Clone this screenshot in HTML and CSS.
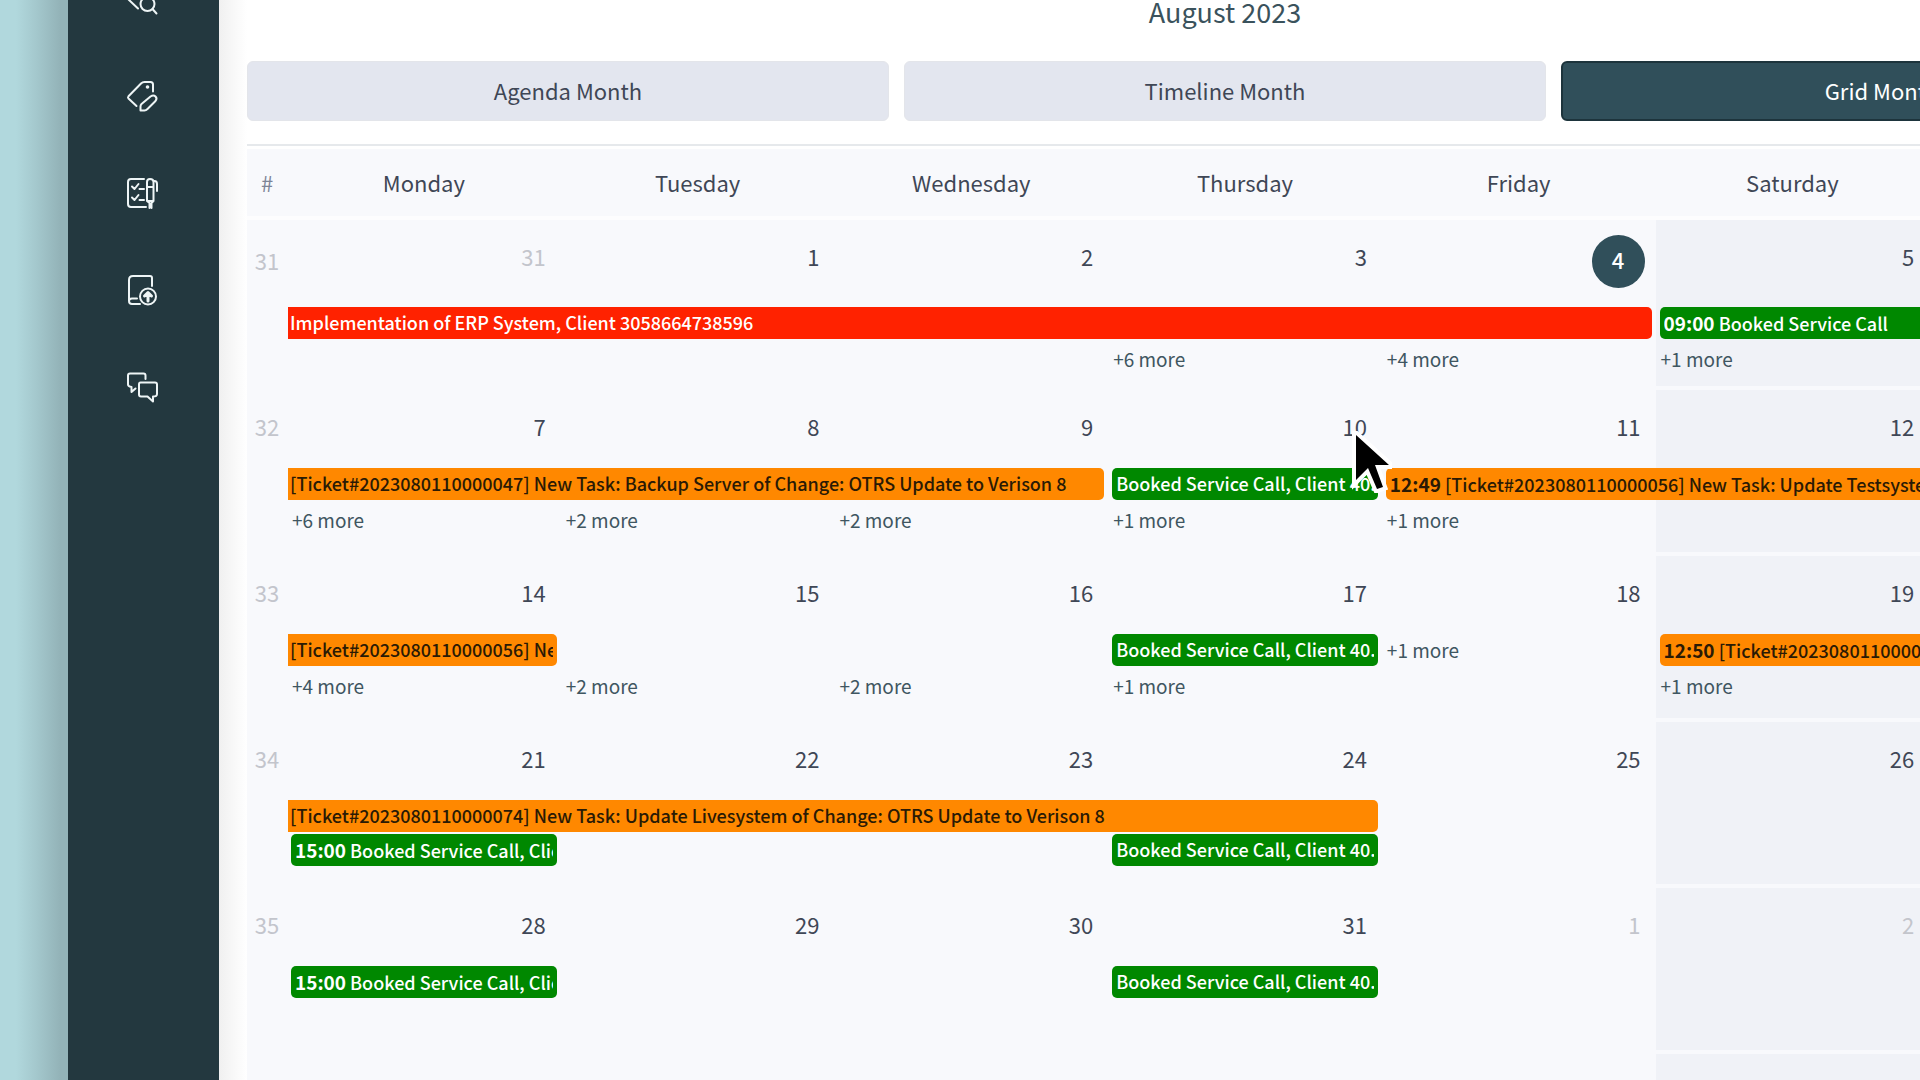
FILE: index.html
```html
<!DOCTYPE html>
<html lang="en">
<head>
    <meta charset="UTF-8" />
    <meta name="viewport" content="width=device-width, initial-scale=1.0" />
    <title>Calendar - August 2023</title>
    <link rel="stylesheet" href="styles.css">
</head>
<body>
    <div class="app">
        <nav class="sidebar" aria-label="Main">
            <a href="#search" aria-label="Search tickets">
                <svg viewBox="0 0 30 30"><path d="M1 15 L11 24.500 M1 15 L15 2 H24 V8"/><circle cx="20.500" cy="20" r="7"/><path d="M25.500 25 L29.500 29.500"/></svg>
            </a>
            <a href="#tickets" aria-label="Edit ticket">
                <svg viewBox="0 0 30 30"><path d="M9.500 25 L1.500 17.500 Q0.500 16.500 1.500 15.300 L14 2.500 Q15.500 1 17.500 1 H23.500 Q26 1 26 3.500 V10.500"/><circle class="dot" cx="20.500" cy="6" r="1.800"/><path d="M13.500 29.500 V25.500 Q13.500 24 14.500 23 L23.500 15.500 Q26.500 13.500 28.500 15.500 Q30.500 17.500 28.500 20 L20.500 28 Q19 29.500 17.500 29.500 Z"/></svg>
            </a>
            <a href="#tasks" aria-label="Tasks">
                <svg viewBox="0 0 30 30"><path d="M17 1 H4 Q1 1 1 4 V26 Q1 29 4 29 H19"/><path d="M5 8.500 L7.500 11 L11.500 6 M12.500 11 H17 M5 19.500 L7.500 22 L11.500 17 M12.500 22 H17"/><path d="M20 23 V4 Q20 1 23 1 Q26.500 1 26.500 4 V23 L24.500 25 V30 M22.500 30 V25 L20 23 M20 9 H26.500 M20 23 H26.500 M26.500 3 H27.500 Q30 3 30 6 V13"/></svg>
            </a>
            <a href="#knowledge" aria-label="Knowledge base">
                <svg viewBox="0 0 30 30"><path d="M25 11 V3 Q25 1 23 1 H6 Q2 1 2 5 V26 Q2 29 5 29 H13 M2 26 Q2 23.500 5 23.500 H10"/><circle cx="21" cy="21.500" r="8"/><path class="thick" d="M21 26 V18.500 M17.500 21 L21 17.500 L24.500 21"/></svg>
            </a>
            <a href="#chat" aria-label="Chat">
                <svg viewBox="0 0 30 30"><path d="M18.500 7 V3.500 Q18.500 1.500 16.500 1.500 H3 Q1 1.500 1 3.500 V12.500 Q1 14.500 4.500 15 V20 L8.500 16.500"/><path d="M13.500 10.500 H28 Q30 10.500 30 12.500 V22 Q30 24.500 26 24.500 V29.500 L20.500 24.500 H14 Q12 24.500 12 22.500 V12.500 Q12 10.500 13.500 10.500 Z"/></svg>
            </a>
        </nav>

        <main class="content">
            <h1>August 2023</h1>
            <div class="view-switch">
                <button type="button">Agenda Month</button>
                <button type="button">Timeline Month</button>
                <button type="button" class="active">Grid Month</button>
            </div>

            <div class="calendar">
                <div class="weekdays">
                    <div class="hash">#</div>
                    <div>Monday</div>
                    <div>Tuesday</div>
                    <div>Wednesday</div>
                    <div>Thursday</div>
                    <div>Friday</div>
                    <div>Saturday</div>
                    <div>Sunday</div>
                </div>

                <div class="week current">
                    <div class="week-no">31</div>
                    <div class="day c1 other">31</div>
                    <div class="day c2">1</div>
                    <div class="day c3">2</div>
                    <div class="day c4">3</div>
                    <div class="day c5"><span class="today">4</span></div>
                    <div class="day c6 weekend">5</div>
                    <div class="day c7 weekend">6</div>
                    <a href="#event" class="event red c1 span5 from-before"><span>Implementation of ERP System, Client 3058664738596</span></a>
                    <a href="#event" class="event green c6"><span><b>09:00</b> Booked Service Call</span></a>
                    <a href="#more" class="more c4">+6 more</a>
                    <a href="#more" class="more c5">+4 more</a>
                    <a href="#more" class="more c6">+1 more</a>
                </div>

                <div class="week">
                    <div class="week-no">32</div>
                    <div class="day c1">7</div>
                    <div class="day c2">8</div>
                    <div class="day c3">9</div>
                    <div class="day c4">10
                        <svg class="cursor" viewBox="-4 -4 40 62"><path d="M0 0 V45 L12 33 L21 54 L27 52 L19 30 H33 Z"/></svg>
                    </div>
                    <div class="day c5">11</div>
                    <div class="day c6 weekend">12</div>
                    <div class="day c7 weekend">13</div>
                    <a href="#event" class="event orange c1 span3 from-before"><span>[Ticket#2023080110000047] New Task: Backup Server of Change: OTRS Update to Verison 8</span></a>
                    <a href="#event" class="event green c4"><span>Booked Service Call, Client 40.</span></a>
                    <a href="#event" class="event orange c5 span3"><span><b>12:49</b> [Ticket#2023080110000056] New Task: Update Testsystem of Change: OTRS Update to Verison 8</span></a>
                    <a href="#more" class="more c1">+6 more</a>
                    <a href="#more" class="more c2">+2 more</a>
                    <a href="#more" class="more c3">+2 more</a>
                    <a href="#more" class="more c4">+1 more</a>
                    <a href="#more" class="more c5">+1 more</a>
                </div>

                <div class="week">
                    <div class="week-no">33</div>
                    <div class="day c1">14</div>
                    <div class="day c2">15</div>
                    <div class="day c3">16</div>
                    <div class="day c4">17</div>
                    <div class="day c5">18</div>
                    <div class="day c6 weekend">19</div>
                    <div class="day c7 weekend">20</div>
                    <a href="#event" class="event orange c1 from-before"><span>[Ticket#2023080110000056] New Task</span></a>
                    <a href="#event" class="event green c4"><span>Booked Service Call, Client 40.</span></a>
                    <a href="#more" class="more c5 slot1">+1 more</a>
                    <a href="#event" class="event orange c6 span2"><span><b>12:50</b> [Ticket#2023080110000074] New Task</span></a>
                    <a href="#more" class="more c1">+4 more</a>
                    <a href="#more" class="more c2">+2 more</a>
                    <a href="#more" class="more c3">+2 more</a>
                    <a href="#more" class="more c4">+1 more</a>
                    <a href="#more" class="more c6">+1 more</a>
                </div>

                <div class="week">
                    <div class="week-no">34</div>
                    <div class="day c1">21</div>
                    <div class="day c2">22</div>
                    <div class="day c3">23</div>
                    <div class="day c4">24</div>
                    <div class="day c5">25</div>
                    <div class="day c6 weekend">26</div>
                    <div class="day c7 weekend">27</div>
                    <a href="#event" class="event orange c1 span4 from-before"><span>[Ticket#2023080110000074] New Task: Update Livesystem of Change: OTRS Update to Verison 8</span></a>
                    <a href="#event" class="event green c1 slot2"><span><b>15:00</b> Booked Service Call, Client</span></a>
                    <a href="#event" class="event green c4 slot2"><span>Booked Service Call, Client 40.</span></a>
                </div>

                <div class="week">
                    <div class="week-no">35</div>
                    <div class="day c1">28</div>
                    <div class="day c2">29</div>
                    <div class="day c3">30</div>
                    <div class="day c4">31</div>
                    <div class="day c5 other">1</div>
                    <div class="day c6 weekend other">2</div>
                    <div class="day c7 weekend other">3</div>
                    <a href="#event" class="event green c1"><span><b>15:00</b> Booked Service Call, Client</span></a>
                    <a href="#event" class="event green c4"><span>Booked Service Call, Client 40.</span></a>
                </div>

                <div class="week">
                    <div class="week-no"></div>
                    <div class="day c6 weekend"></div>
                    <div class="day c7 weekend"></div>
                </div>
            </div>
        </main>
    </div>
</body>
</html>
```

FILE: styles.css
```css
* {
    box-sizing: border-box;
}
body {
    margin: 0;
    height: 100vh;
    overflow: hidden;
    font-family: 'Noto Sans CJK SC', 'Noto Sans', sans-serif;
    font-size: 22px;
    line-height: 28px;
    color: #3f4756;
    background: linear-gradient(to right, #b1d8dd 16px, #a4c8cd 36px, #93b3b8 60px, #93b3b8 68px);
}
a {
    color: inherit;
    text-decoration: none;
}

.app {
    display: flex;
    width: max-content;
    min-height: calc(100vh + 16px);
    margin-top: -16px;
    margin-left: 68px;
    background: #fff;
}

.sidebar {
    display: flex;
    flex-direction: column;
    align-items: center;
    gap: 67px;
    flex: none;
    width: 151px;
    padding-right: 4px;
    background: #23383f;
}
.sidebar a {
    height: 30px;
}
.sidebar svg {
    display: block;
    width: 30px;
    height: 30px;
    overflow: visible;
    fill: none;
    stroke: #eef5f6;
    stroke-width: 2;
    stroke-linejoin: round;
    stroke-linecap: round;
}
.sidebar .dot {
    fill: #eef5f6;
    stroke: none;
}
.sidebar .thick {
    stroke-width: 3;
}

/* the calendar is a bit wider than the window and runs off its right edge */
.content {
    width: calc(100vw + 64px);
    padding: 12px 0 0 28px;
    background: linear-gradient(to right, #f0f0f0, #fff 28px);
}
h1 {
    margin: 0 0 33px;
    font-size: 27px;
    line-height: 32px;
    font-weight: 400;
    text-align: center;
    color: #3a525c;
}

.view-switch {
    display: grid;
    grid-template-columns: repeat(3, 1fr);
    gap: 15px;
    padding-bottom: 23px;
    border-bottom: 2px solid #e6e9ec;
}
.view-switch button {
    height: 60px;
    padding: 0 0 2px;
    border: 1px solid #e3e5ea;
    border-radius: 6px;
    background: #e3e6ef;
    font: inherit;
    color: #3f4756;
    cursor: pointer;
}
.view-switch .active {
    border: 2px solid #1d343c;
    background: #304f5a;
    color: #fff;
}

.calendar {
    margin-top: 3px;
    background: #f8f9fc;
}
.weekdays,
.week {
    display: grid;
    grid-template-columns: 40px repeat(7, 1fr);
}
.weekdays {
    height: 71px;
    padding-top: 19px;
    border-bottom: 4px solid #fdfdfe;
    text-align: center;
}
.hash {
    color: #7d8496;
}

.week {
    grid-template-rows: 78px 34px 34px 1fr;
    height: 166px;
    padding-bottom: 4px;
}
.week.current {
    grid-template-rows: 87px 34px 34px 1fr;
    height: 170px;
}
.week-no {
    grid-area: 1 / 1;
    padding-top: 22px;
    text-align: center;
    color: #c3c5cc;
}
.current .week-no {
    padding-top: 26px;
}
.day {
    position: relative;
    grid-row: 1 / -1;
    padding: 22px 15px 0 0;
    text-align: right;
}
.day.other {
    color: #c3c5cc;
}
.day.weekend {
    background: #f0f2f7;
}
.today {
    display: block;
    width: 53px;
    height: 53px;
    margin: -7px -4px 0 auto;
    border-radius: 50%;
    background: #304f5a;
    color: #fff;
    font-weight: 500;
    line-height: 48px;
    text-align: center;
}

.c1 { grid-column: 2; }
.c2 { grid-column: 3; }
.c3 { grid-column: 4; }
.c4 { grid-column: 5; }
.c5 { grid-column: 6; }
.c6 { grid-column: 7; }
.c7 { grid-column: 8; }
.span2 { grid-column-end: span 2; }
.span3 { grid-column-end: span 3; }
.span4 { grid-column-end: span 4; }
.span5 { grid-column-end: span 5; }

.event {
    position: relative;
    grid-row: 2;
    min-width: 0;
    height: 32px;
    margin: 0 4px;
    padding: 0 4px;
    border-radius: 5px;
    font-size: 18px;
    font-weight: 500;
    line-height: 31px;
}
.event span {
    display: block;
    overflow: hidden;
    white-space: nowrap;
}
.event b {
    font-size: 19px;
}
.event.from-before {
    margin-left: 1px;
    padding-left: 2px;
    border-radius: 0 5px 5px 0;
}
.event.slot2 {
    grid-row: 3;
}
.red {
    background: #ff2200;
    color: #fff;
}
.orange {
    background: #ff8800;
    color: #2a1a05;
}
.green {
    background: #008800;
    color: #fff;
}

.more {
    position: relative;
    grid-row: 3;
    justify-self: start;
    padding-left: 5px;
    font-size: 19px;
    line-height: 35px;
    color: #3f5661;
}
.more.slot1 {
    grid-row: 2;
    line-height: 31px;
}

.cursor {
    position: absolute;
    top: 41px;
    right: -10px;
    z-index: 2;
    width: 40px;
    height: 62px;
    fill: #000;
    stroke: #fff;
    stroke-width: 8;
    paint-order: stroke;
}
```
